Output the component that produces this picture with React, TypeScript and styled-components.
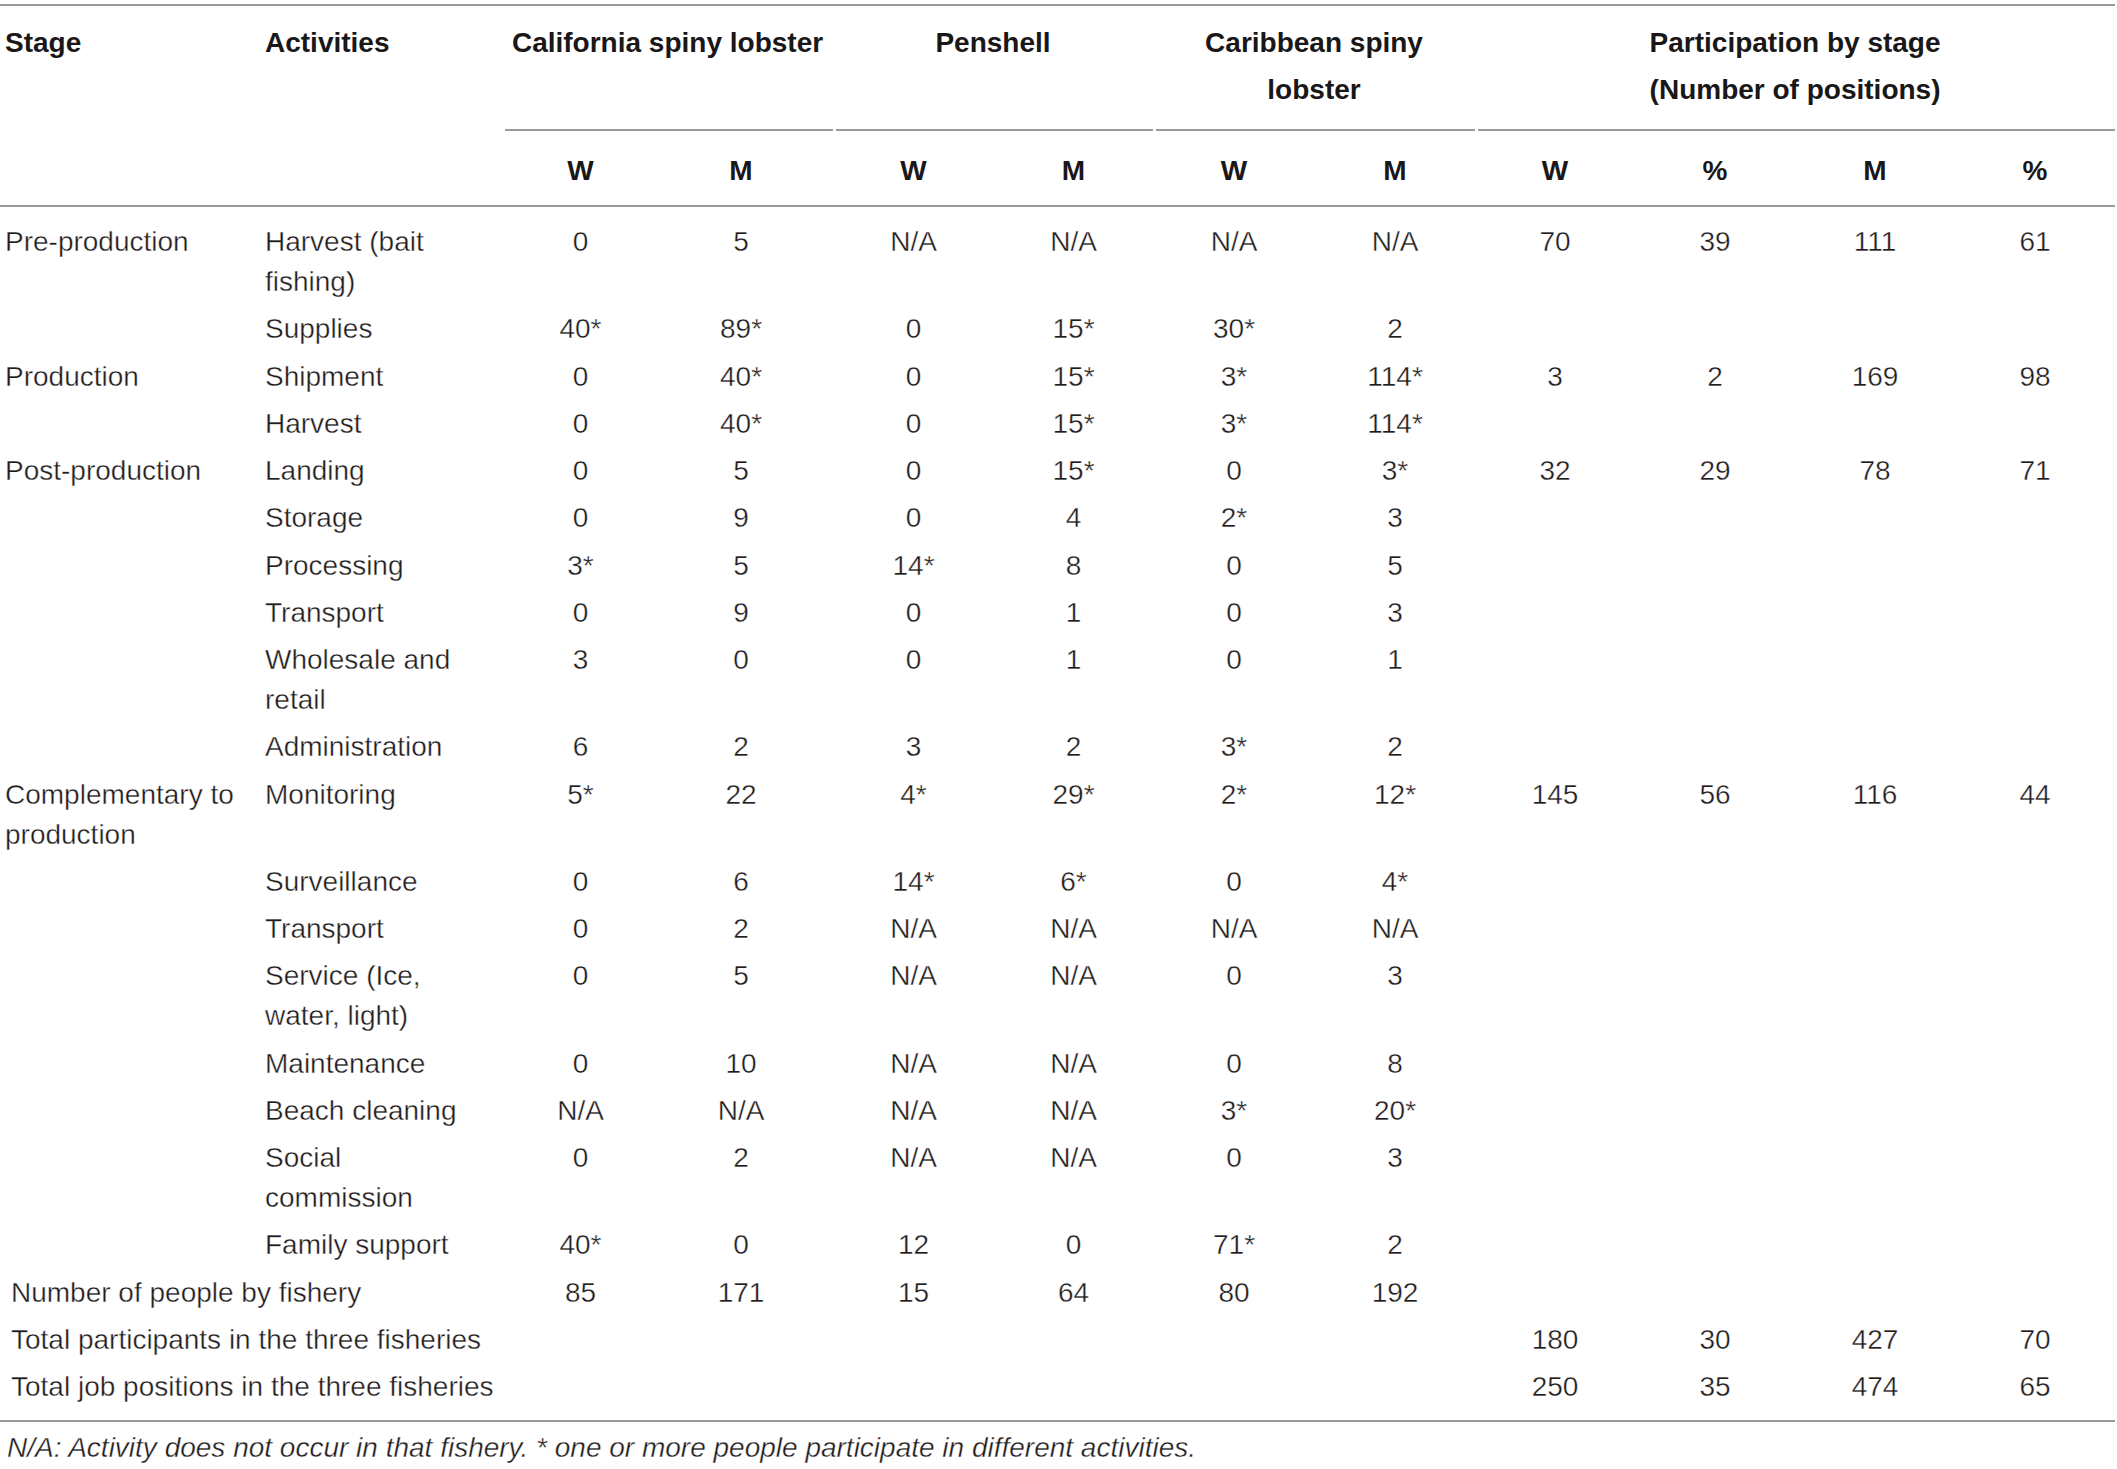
import React from "react";
import styled, { createGlobalStyle } from "styled-components";

const GlobalStyle = createGlobalStyle`
  html, body { margin: 0; padding: 0; background: #ffffff; }
  body {
    font-family: "Liberation Sans", Arial, Helvetica, sans-serif;
    color: #1f1b1c;
  }
`;

const Page = styled.div`
  padding-top: 4px;
  width: 2115px;
`;

const Table = styled.table`
  width: 2115px;
  table-layout: fixed;
  border-collapse: separate;
  border-spacing: 0;
  border-top: 2px solid #9a9a9a;
  border-bottom: 2px solid #9a9a9a;
  font-size: 28px;
`;

const Col = styled.col<{ $w: number }>`
  width: ${(p) => p.$w}px;
`;

const LabelHead = styled.th`
  font-weight: 700;
  line-height: 47px;
  text-align: left;
  vertical-align: top;
  padding: 12.5px 10px 0 5px;
  border-bottom: 2px solid #9a9a9a;
  color: #1a1718;
`;

const GroupHead = styled.th`
  font-weight: 700;
  line-height: 47px;
  text-align: center;
  vertical-align: top;
  padding: 12.5px 0 18.5px;
  color: #1a1718;
  background-image: linear-gradient(#9a9a9a, #9a9a9a);
  background-repeat: no-repeat;
  background-position: right bottom;
  background-size: calc(100% - 3px) 2px;
`;

const SubHead = styled.th<{ $pr?: number }>`
  font-weight: 700;
  line-height: 47px;
  text-align: center;
  vertical-align: top;
  padding: 15.5px ${(p) => p.$pr ?? 0}px 11.5px 0;
  border-bottom: 2px solid #9a9a9a;
  color: #1a1718;
`;

const Cell = styled.td<{
  $num?: boolean;
  $first?: boolean;
  $last?: boolean;
  $indent?: number;
  $pr?: number;
}>`
  font-weight: 400;
  line-height: 40px;
  vertical-align: top;
  text-align: ${(p) => (p.$num ? "center" : "left")};
  padding-top: ${(p) => (p.$first ? 15 : 4)}px;
  padding-bottom: ${(p) => (p.$last ? 12.8 : 3.26)}px;
  padding-left: ${(p) => (p.$num ? 0 : p.$indent ?? 5)}px;
  padding-right: ${(p) => (p.$num ? p.$pr ?? 0 : 10)}px;
  -webkit-text-stroke: 0.35px #ffffff;
`;

const Footnote = styled.p`
  margin: 9px 0 0;
  padding-left: 7px;
  font-size: 28px;
  line-height: 34px;
  font-style: italic;
  -webkit-text-stroke: 0.35px #ffffff;
`;

type Row = {
  stage?: string;
  activity: string;
  values: string[];
  part?: string[];
};

const rows: Row[] = [
  { stage: "Pre-production", activity: "Harvest (bait fishing)", values: ["0", "5", "N/A", "N/A", "N/A", "N/A"], part: ["70", "39", "111", "61"] },
  { activity: "Supplies", values: ["40*", "89*", "0", "15*", "30*", "2"] },
  { stage: "Production", activity: "Shipment", values: ["0", "40*", "0", "15*", "3*", "114*"], part: ["3", "2", "169", "98"] },
  { activity: "Harvest", values: ["0", "40*", "0", "15*", "3*", "114*"] },
  { stage: "Post-production", activity: "Landing", values: ["0", "5", "0", "15*", "0", "3*"], part: ["32", "29", "78", "71"] },
  { activity: "Storage", values: ["0", "9", "0", "4", "2*", "3"] },
  { activity: "Processing", values: ["3*", "5", "14*", "8", "0", "5"] },
  { activity: "Transport", values: ["0", "9", "0", "1", "0", "3"] },
  { activity: "Wholesale and retail", values: ["3", "0", "0", "1", "0", "1"] },
  { activity: "Administration", values: ["6", "2", "3", "2", "3*", "2"] },
  { stage: "Complementary to production", activity: "Monitoring", values: ["5*", "22", "4*", "29*", "2*", "12*"], part: ["145", "56", "116", "44"] },
  { activity: "Surveillance", values: ["0", "6", "14*", "6*", "0", "4*"] },
  { activity: "Transport", values: ["0", "2", "N/A", "N/A", "N/A", "N/A"] },
  { activity: "Service (Ice, water, light)", values: ["0", "5", "N/A", "N/A", "0", "3"] },
  { activity: "Maintenance", values: ["0", "10", "N/A", "N/A", "0", "8"] },
  { activity: "Beach cleaning", values: ["N/A", "N/A", "N/A", "N/A", "3*", "20*"] },
  { activity: "Social commission", values: ["0", "2", "N/A", "N/A", "0", "3"] },
  { activity: "Family support", values: ["40*", "0", "12", "0", "71*", "2"] },
];

const widths = [260, 242, 157, 174, 161, 159, 162, 160, 160, 160, 160, 160];
// extra right padding per numeric column (California M sits slightly left of its column centre)
const padRight = [0, 10, 0, 0, 0, 0, 0, 0, 0, 0];

export default function App() {
  return (
    <Page>
      <GlobalStyle />
      <Table>
        <colgroup>
          {widths.map((w, i) => (
            <Col key={i} $w={w} />
          ))}
        </colgroup>
        <thead>
          <tr>
            <LabelHead rowSpan={2}>Stage</LabelHead>
            <LabelHead rowSpan={2}>Activities</LabelHead>
            <GroupHead colSpan={2}>California spiny lobster</GroupHead>
            <GroupHead colSpan={2}>Penshell</GroupHead>
            <GroupHead colSpan={2}>
              Caribbean spiny
              <br />
              lobster
            </GroupHead>
            <GroupHead colSpan={4}>
              Participation by stage
              <br />
              (Number of positions)
            </GroupHead>
          </tr>
          <tr>
            {["W", "M", "W", "M", "W", "M", "W", "%", "M", "%"].map((h, i) => (
              <SubHead key={i} $pr={padRight[i]}>
                {h}
              </SubHead>
            ))}
          </tr>
        </thead>
        <tbody>
          {rows.map((r, i) => {
            const first = i === 0;
            const part = r.part ?? ["", "", "", ""];
            return (
              <tr key={i}>
                <Cell $first={first}>{r.stage ?? ""}</Cell>
                <Cell $first={first}>{r.activity}</Cell>
                {r.values.map((v, j) => (
                  <Cell key={j} $num $first={first} $pr={padRight[j]}>
                    {v}
                  </Cell>
                ))}
                {part.map((v, j) => (
                  <Cell key={`p${j}`} $num $first={first}>
                    {v}
                  </Cell>
                ))}
              </tr>
            );
          })}
          <tr>
            <Cell colSpan={2} $indent={11}>
              Number of people by fishery
            </Cell>
            {["85", "171", "15", "64", "80", "192", "", "", "", ""].map((v, j) => (
              <Cell key={j} $num $pr={padRight[j]}>
                {v}
              </Cell>
            ))}
          </tr>
          <tr>
            <Cell colSpan={8} $indent={11}>
              Total participants in the three fisheries
            </Cell>
            {["180", "30", "427", "70"].map((v, j) => (
              <Cell key={j} $num>
                {v}
              </Cell>
            ))}
          </tr>
          <tr>
            <Cell colSpan={8} $indent={11} $last>
              Total job positions in the three fisheries
            </Cell>
            {["250", "35", "474", "65"].map((v, j) => (
              <Cell key={j} $num $last>
                {v}
              </Cell>
            ))}
          </tr>
        </tbody>
      </Table>
      <Footnote>
        N/A: Activity does not occur in that fishery. * one or more people participate in different activities.
      </Footnote>
    </Page>
  );
}
